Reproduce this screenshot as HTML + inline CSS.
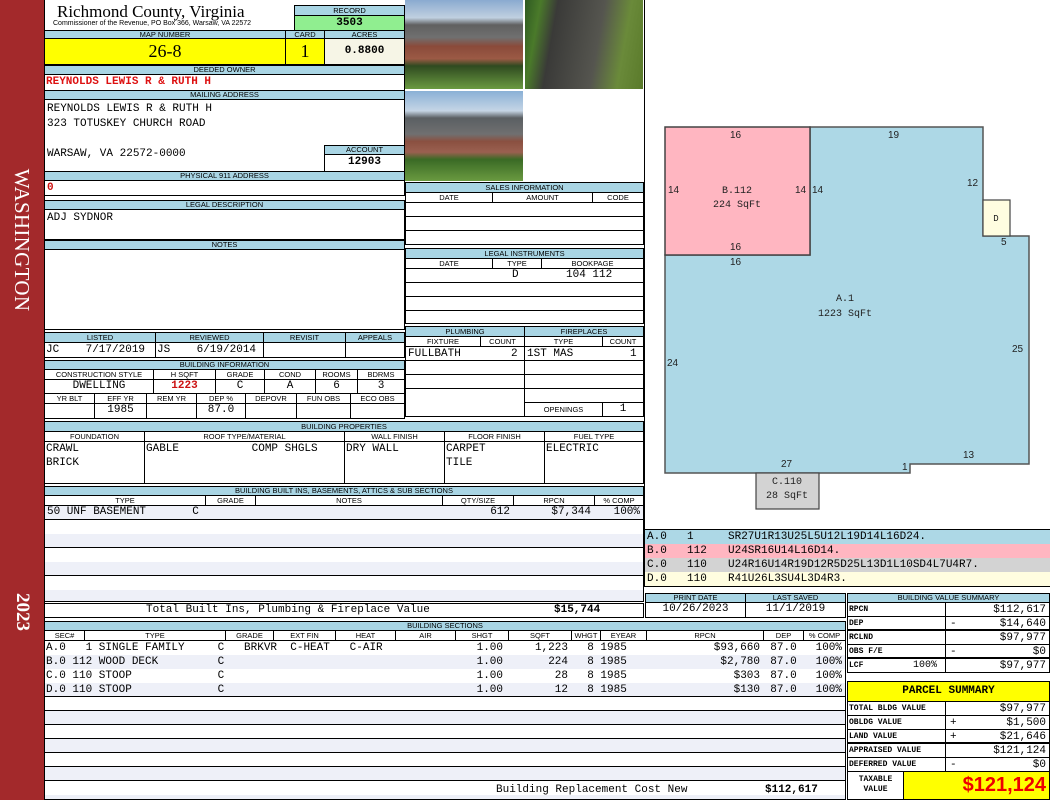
<!DOCTYPE html>
<html><head><meta charset="utf-8"><style>
*{margin:0;padding:0;box-sizing:border-box}
body{width:1050px;height:800px;position:relative;background:#fff;overflow:hidden;font-family:"Liberation Mono",monospace;font-size:11px;color:#000}
div{position:absolute}
.bx{border:1px solid #000}
.l{background:#a9d5e4;border:1px solid #000;font:7.5px/8px "Liberation Sans",sans-serif;text-align:center;white-space:nowrap;overflow:hidden}
.v{font:11px/13px "Liberation Mono",monospace;white-space:pre}
.c{text-align:center}.r{text-align:right}
.sm{font:bold 9px/12px "Liberation Mono",monospace;white-space:pre}
</style></head><body>
<!-- sidebar -->
<div style="left:0;top:0;width:45px;height:800px;background:#a3292b;border-right:1px solid #000"></div>
<div style="left:22px;top:240px;width:0;height:0"><div style="left:-90px;top:-11px;width:180px;height:22px;transform:rotate(90deg);color:#fff;font:21px/22px 'Liberation Serif',serif;text-align:center;letter-spacing:0.3px">WASHINGTON</div></div>
<div style="left:22px;top:612px;width:0;height:0"><div style="left:-30px;top:-10px;width:60px;height:20px;transform:rotate(90deg);color:#fff;font:bold 19px/20px 'Liberation Serif',serif;text-align:center">2023</div></div>

<!-- header -->
<div style="left:57px;top:2px;font:17px/19px 'Liberation Serif',serif">Richmond County, Virginia</div>
<div style="left:53px;top:19px;font:7px/9px 'Liberation Sans',sans-serif">Commissioner of the Revenue, PO Box 366, Warsaw, VA 22572</div>
<div class="l" style="left:294px;top:5px;width:111px;height:11px;line-height:9px">RECORD</div>
<div style="left:294px;top:15px;width:111px;height:16px;background:#90ee90;border:1px solid #000;font:bold 11px/14px 'Liberation Mono';text-align:center">3503</div>
<div class="l" style="left:44px;top:30px;width:242px;height:9px;line-height:7px">MAP NUMBER</div>
<div class="l" style="left:285px;top:30px;width:40px;height:9px;line-height:7px">CARD</div>
<div class="l" style="left:324px;top:30px;width:81px;height:9px;line-height:7px">ACRES</div>
<div style="left:44px;top:38px;width:242px;height:27px;background:#ffff00;border:1px solid #000;font:18px/25px 'Liberation Serif',serif;text-align:center">26-8</div>
<div style="left:285px;top:38px;width:40px;height:27px;background:#ffff00;border:1px solid #000;font:18px/25px 'Liberation Serif',serif;text-align:center">1</div>
<div style="left:324px;top:38px;width:81px;height:27px;background:#f6f5e6;border:1px solid #000;font:bold 11px/25px 'Liberation Mono';text-align:center">0.8800</div>
<div class="l" style="left:44px;top:65px;width:361px;height:10px">DEEDED OWNER</div>
<div class="bx" style="left:44px;top:74px;width:361px;height:17px"></div>
<div style="left:46px;top:76px;color:#d11;font:bold 11px/13px 'Liberation Mono';white-space:pre">REYNOLDS LEWIS R &amp; RUTH H</div>
<div class="l" style="left:44px;top:90px;width:361px;height:10px">MAILING ADDRESS</div>
<div class="bx" style="left:44px;top:99px;width:361px;height:73px"></div>
<div class="v" style="left:47px;top:102px;line-height:15px">REYNOLDS LEWIS R &amp; RUTH H
323 TOTUSKEY CHURCH ROAD</div>
<div class="v" style="left:47px;top:148px">WARSAW, VA 22572-0000</div>
<div class="l" style="left:324px;top:145px;width:81px;height:10px">ACCOUNT</div>
<div class="bx" style="left:324px;top:154px;width:81px;height:18px;font:bold 11px/15px 'Liberation Mono';text-align:center">12903</div>
<div class="l" style="left:44px;top:171px;width:361px;height:10px">PHYSICAL 911 ADDRESS</div>
<div class="bx" style="left:44px;top:180px;width:361px;height:16px"></div>
<div style="left:47px;top:182px;color:#c11;font:bold 11px/13px 'Liberation Mono'">0</div>
<div class="l" style="left:44px;top:200px;width:361px;height:10px">LEGAL DESCRIPTION</div>
<div class="bx" style="left:44px;top:209px;width:361px;height:31px"></div>
<div class="v" style="left:47px;top:212px">ADJ SYDNOR</div>
<div class="l" style="left:44px;top:240px;width:361px;height:10px">NOTES</div>
<div class="bx" style="left:44px;top:249px;width:361px;height:81px"></div>

<!-- listed -->
<div class="l" style="left:44px;top:332px;width:112px;height:11px;line-height:9px">LISTED</div>
<div class="l" style="left:155px;top:332px;width:109px;height:11px;line-height:9px">REVIEWED</div>
<div class="l" style="left:263px;top:332px;width:83px;height:11px;line-height:9px">REVISIT</div>
<div class="l" style="left:345px;top:332px;width:60px;height:11px;line-height:9px">APPEALS</div>
<div class="bx" style="left:44px;top:342px;width:112px;height:16px"></div>
<div class="bx" style="left:155px;top:342px;width:109px;height:16px"></div>
<div class="bx" style="left:263px;top:342px;width:83px;height:16px"></div>
<div class="bx" style="left:345px;top:342px;width:60px;height:16px"></div>
<div class="v" style="left:46px;top:344px">JC    7/17/2019</div>
<div class="v" style="left:157px;top:344px">JS    6/19/2014</div>

<!-- building info -->
<div class="l" style="left:44px;top:360px;width:361px;height:10px">BUILDING INFORMATION</div>
<div class="l" style="left:44px;top:369px;width:110px;height:11px;background:#fff;line-height:9px">CONSTRUCTION STYLE</div>
<div class="l" style="left:153px;top:369px;width:63px;height:11px;background:#fff;line-height:9px">H SQFT</div>
<div class="l" style="left:215px;top:369px;width:50px;height:11px;background:#fff;line-height:9px">GRADE</div>
<div class="l" style="left:264px;top:369px;width:52px;height:11px;background:#fff;line-height:9px">COND</div>
<div class="l" style="left:315px;top:369px;width:43px;height:11px;background:#fff;line-height:9px">ROOMS</div>
<div class="l" style="left:357px;top:369px;width:48px;height:11px;background:#fff;line-height:9px">BDRMS</div>
<div class="bx v c" style="left:44px;top:379px;width:110px;height:15px">DWELLING</div>
<div class="bx c" style="left:153px;top:379px;width:63px;height:15px;color:#c11;font:bold 11px/13px 'Liberation Mono'">1223</div>
<div class="bx v c" style="left:215px;top:379px;width:50px;height:15px">C</div>
<div class="bx v c" style="left:264px;top:379px;width:52px;height:15px">A</div>
<div class="bx v c" style="left:315px;top:379px;width:43px;height:15px">6</div>
<div class="bx v c" style="left:357px;top:379px;width:48px;height:15px">3</div>
<div class="l" style="left:44px;top:393px;width:51px;height:11px;background:#fff;line-height:9px">YR BLT</div>
<div class="l" style="left:94px;top:393px;width:53px;height:11px;background:#fff;line-height:9px">EFF YR</div>
<div class="l" style="left:146px;top:393px;width:51px;height:11px;background:#fff;line-height:9px">REM YR</div>
<div class="l" style="left:196px;top:393px;width:50px;height:11px;background:#fff;line-height:9px">DEP %</div>
<div class="l" style="left:245px;top:393px;width:52px;height:11px;background:#fff;line-height:9px">DEPOVR</div>
<div class="l" style="left:296px;top:393px;width:55px;height:11px;background:#fff;line-height:9px">FUN OBS</div>
<div class="l" style="left:350px;top:393px;width:55px;height:11px;background:#fff;line-height:9px">ECO OBS</div>
<div class="bx" style="left:44px;top:403px;width:51px;height:16px"></div>
<div class="bx v c" style="left:94px;top:403px;width:53px;height:16px">1985</div>
<div class="bx" style="left:146px;top:403px;width:51px;height:16px"></div>
<div class="bx v c" style="left:196px;top:403px;width:50px;height:16px">87.0</div>
<div class="bx" style="left:245px;top:403px;width:52px;height:16px"></div>
<div class="bx" style="left:296px;top:403px;width:55px;height:16px"></div>
<div class="bx" style="left:350px;top:403px;width:55px;height:16px"></div>

<!-- photos -->
<div style="left:405px;top:0;width:118px;height:89px;background:linear-gradient(#8aaad0 0,#c0d0e0 20%,#606060 28%,#707070 42%,#8a4a3a 52%,#9b5a45 66%,#2f4a20 74%,#6a9a40 100%)"></div>
<div style="left:525px;top:0;width:118px;height:89px;background:linear-gradient(100deg,#2f5a22 0,#4a7a2a 12%,#3a3a38 25%,#55554f 60%,#6a8a3a 80%,#5a7a2a 100%)"></div>
<div style="left:405px;top:91px;width:118px;height:90px;background:linear-gradient(#8ab0d6 0,#c5d5e5 22%,#5a5f63 30%,#707070 48%,#8a5040 56%,#9a6050 68%,#3a6a25 76%,#6a9a40 100%)"></div>

<!-- sales -->
<div class="l" style="left:405px;top:182px;width:239px;height:11px;line-height:9px">SALES INFORMATION</div>
<div class="l" style="left:405px;top:192px;width:88px;height:11px;background:#fff;line-height:9px">DATE</div>
<div class="l" style="left:492px;top:192px;width:101px;height:11px;background:#fff;line-height:9px">AMOUNT</div>
<div class="l" style="left:592px;top:192px;width:52px;height:11px;background:#fff;line-height:9px">CODE</div>
<div class="bx" style="left:405px;top:202px;width:239px;height:15px"></div>
<div class="bx" style="left:405px;top:216px;width:239px;height:15px"></div>
<div class="bx" style="left:405px;top:230px;width:239px;height:15px"></div>
<div class="l" style="left:405px;top:248px;width:239px;height:11px;line-height:9px">LEGAL INSTRUMENTS</div>
<div class="l" style="left:405px;top:258px;width:88px;height:11px;background:#fff;line-height:9px">DATE</div>
<div class="l" style="left:492px;top:258px;width:50px;height:11px;background:#fff;line-height:9px">TYPE</div>
<div class="l" style="left:541px;top:258px;width:103px;height:11px;background:#fff;line-height:9px">BOOKPAGE</div>
<div class="bx" style="left:405px;top:268px;width:239px;height:15px"></div>
<div class="v" style="left:512px;top:269px">D</div><div class="v" style="left:566px;top:269px">104 112</div>
<div class="bx" style="left:405px;top:282px;width:239px;height:15px"></div>
<div class="bx" style="left:405px;top:296px;width:239px;height:15px"></div>
<div class="bx" style="left:405px;top:310px;width:239px;height:14px"></div>

<!-- plumbing / fireplaces -->
<div class="l" style="left:405px;top:326px;width:120px;height:11px;line-height:9px">PLUMBING</div>
<div class="l" style="left:524px;top:326px;width:120px;height:11px;line-height:9px">FIREPLACES</div>
<div class="l" style="left:405px;top:336px;width:76px;height:11px;background:#fff;line-height:9px">FIXTURE</div>
<div class="l" style="left:480px;top:336px;width:45px;height:11px;background:#fff;line-height:9px">COUNT</div>
<div class="l" style="left:524px;top:336px;width:79px;height:11px;background:#fff;line-height:9px">TYPE</div>
<div class="l" style="left:602px;top:336px;width:42px;height:11px;background:#fff;line-height:9px">COUNT</div>
<div class="bx" style="left:405px;top:346px;width:120px;height:71px"></div>
<div class="bx" style="left:524px;top:346px;width:120px;height:57px"></div>
<div style="left:405px;top:360px;width:239px;height:1px;background:#000"></div>
<div style="left:405px;top:374px;width:239px;height:1px;background:#000"></div>
<div style="left:405px;top:388px;width:239px;height:1px;background:#000"></div>
<div class="v" style="left:408px;top:348px">FULLBATH</div><div class="v" style="left:511px;top:348px">2</div>
<div class="v" style="left:527px;top:348px">1ST MAS</div><div class="v" style="left:630px;top:348px">1</div>
<div class="bx" style="left:524px;top:402px;width:79px;height:15px;font:7.5px/13px 'Liberation Sans';text-align:center">OPENINGS</div>
<div class="bx v c" style="left:602px;top:402px;width:42px;height:15px">1</div>

<!-- building properties -->
<div class="l" style="left:44px;top:421px;width:600px;height:11px;line-height:9px">BUILDING PROPERTIES</div>
<div class="l" style="left:44px;top:431px;width:101px;height:11px;background:#fff;line-height:9px">FOUNDATION</div>
<div class="l" style="left:144px;top:431px;width:201px;height:11px;background:#fff;line-height:9px">ROOF TYPE/MATERIAL</div>
<div class="l" style="left:344px;top:431px;width:101px;height:11px;background:#fff;line-height:9px">WALL FINISH</div>
<div class="l" style="left:444px;top:431px;width:101px;height:11px;background:#fff;line-height:9px">FLOOR FINISH</div>
<div class="l" style="left:544px;top:431px;width:100px;height:11px;background:#fff;line-height:9px">FUEL TYPE</div>
<div class="bx" style="left:44px;top:441px;width:101px;height:43px"></div>
<div class="bx" style="left:144px;top:441px;width:201px;height:43px"></div>
<div class="bx" style="left:344px;top:441px;width:101px;height:43px"></div>
<div class="bx" style="left:444px;top:441px;width:101px;height:43px"></div>
<div class="bx" style="left:544px;top:441px;width:100px;height:43px"></div>
<div class="v" style="left:46px;top:442px;line-height:14px">CRAWL
BRICK</div>
<div class="v" style="left:146px;top:442px;line-height:14px">GABLE           COMP SHGLS</div>
<div class="v" style="left:346px;top:442px;line-height:14px">DRY WALL</div>
<div class="v" style="left:446px;top:442px;line-height:14px">CARPET
TILE</div>
<div class="v" style="left:546px;top:442px;line-height:14px">ELECTRIC</div>

<!-- built ins -->
<div class="l" style="left:44px;top:486px;width:600px;height:10px">BUILDING BUILT INS, BASEMENTS, ATTICS &amp; SUB SECTIONS</div>
<div class="l" style="left:44px;top:495px;width:162px;height:11px;background:#fff;line-height:9px">TYPE</div>
<div class="l" style="left:205px;top:495px;width:51px;height:11px;background:#fff;line-height:9px">GRADE</div>
<div class="l" style="left:255px;top:495px;width:188px;height:11px;background:#fff;line-height:9px">NOTES</div>
<div class="l" style="left:442px;top:495px;width:72px;height:11px;background:#fff;line-height:9px">QTY/SIZE</div>
<div class="l" style="left:513px;top:495px;width:82px;height:11px;background:#fff;line-height:9px">RPCN</div>
<div class="l" style="left:594px;top:495px;width:50px;height:11px;background:#fff;line-height:9px">% COMP</div>
<div class="bx" style="left:44px;top:505px;width:600px;height:97px;background:repeating-linear-gradient(#eef0f8 0 14px,#fff 14px 28px)"></div>
<div style="left:44px;top:519px;width:600px;height:1px;background:#000"></div>
<div style="left:44px;top:547px;width:600px;height:1px;background:#000"></div>
<div style="left:44px;top:575px;width:600px;height:1px;background:#000"></div>
<div class="v" style="left:47px;top:506px">50 UNF BASEMENT       C</div>
<div class="v r" style="left:442px;top:506px;width:68px">612</div>
<div class="v r" style="left:513px;top:506px;width:78px">$7,344</div>
<div class="v r" style="left:594px;top:506px;width:46px">100%</div>
<div class="bx" style="left:44px;top:603px;width:600px;height:15px"></div>
<div class="v" style="left:146px;top:604px">Total Built Ins, Plumbing &amp; Fireplace Value</div>
<div class="v" style="left:554px;top:604px;font-weight:bold">$15,744</div>

<!-- building sections -->
<div class="l" style="left:44px;top:621px;width:802px;height:10px">BUILDING SECTIONS</div>
<div class="l" style="left:44px;top:630px;width:41px;height:11px;background:#fff;line-height:9px">SEC#</div>
<div class="l" style="left:84px;top:630px;width:142px;height:11px;background:#fff;line-height:9px">TYPE</div>
<div class="l" style="left:225px;top:630px;width:49px;height:11px;background:#fff;line-height:9px">GRADE</div>
<div class="l" style="left:273px;top:630px;width:63px;height:11px;background:#fff;line-height:9px">EXT FIN</div>
<div class="l" style="left:335px;top:630px;width:61px;height:11px;background:#fff;line-height:9px">HEAT</div>
<div class="l" style="left:395px;top:630px;width:61px;height:11px;background:#fff;line-height:9px">AIR</div>
<div class="l" style="left:455px;top:630px;width:54px;height:11px;background:#fff;line-height:9px">SHGT</div>
<div class="l" style="left:508px;top:630px;width:64px;height:11px;background:#fff;line-height:9px">SQFT</div>
<div class="l" style="left:571px;top:630px;width:30px;height:11px;background:#fff;line-height:9px">WHGT</div>
<div class="l" style="left:600px;top:630px;width:47px;height:11px;background:#fff;line-height:9px">EYEAR</div>
<div class="l" style="left:646px;top:630px;width:118px;height:11px;background:#fff;line-height:9px">RPCN</div>
<div class="l" style="left:763px;top:630px;width:41px;height:11px;background:#fff;line-height:9px">DEP</div>
<div class="l" style="left:803px;top:630px;width:43px;height:11px;background:#fff;line-height:9px">% COMP</div>
<div class="bx" style="left:44px;top:640px;width:802px;height:160px;background:repeating-linear-gradient(#fff 0 14px,#eef0f8 14px 28px)"></div>
<div style="left:44px;top:696px;width:802px;height:1px;background:#000"></div>
<div style="left:44px;top:710px;width:802px;height:1px;background:#000"></div>
<div style="left:44px;top:724px;width:802px;height:1px;background:#000"></div>
<div style="left:44px;top:738px;width:802px;height:1px;background:#000"></div>
<div style="left:44px;top:752px;width:802px;height:1px;background:#000"></div>
<div style="left:44px;top:766px;width:802px;height:1px;background:#000"></div>
<div style="left:44px;top:780px;width:802px;height:1px;background:#000"></div>
<div class="v" style="left:46px;top:641px;line-height:14px">A.0   1 SINGLE FAMILY     C   BRKVR  C-HEAT   C-AIR
B.0 112 WOOD DECK         C
C.0 110 STOOP             C
D.0 110 STOOP             C</div>
<div class="v r" style="left:455px;top:641px;width:48px;line-height:14px">1.00
1.00
1.00
1.00</div>
<div class="v r" style="left:508px;top:641px;width:60px;line-height:14px">1,223
224
28
12</div>
<div class="v" style="left:574px;top:641px;line-height:14px">  8 1985
  8 1985
  8 1985
  8 1985</div>
<div class="v r" style="left:646px;top:641px;width:114px;line-height:14px">$93,660
$2,780
$303
$130</div>
<div class="v c" style="left:763px;top:641px;width:41px;line-height:14px">87.0
87.0
87.0
87.0</div>
<div class="v r" style="left:803px;top:641px;width:39px;line-height:14px">100%
100%
100%
100%</div>
<div class="v" style="left:496px;top:784px">Building Replacement Cost New</div>
<div class="v" style="left:765px;top:784px;font-weight:bold">$112,617</div>

<!-- sketch -->
<div style="left:644px;top:0;width:406px;height:529px;border-left:1px solid #000"></div>
<svg style="position:absolute;left:0;top:0" width="1050" height="800">
<polygon points="665,473 665,255 810,255 810,127 983,127 983,236 1029,236 1029,464 910,464 910,473" fill="#add8e6" stroke="#555" stroke-width="1.5"/>
<rect x="665" y="127" width="145" height="128" fill="#ffb6c1" stroke="#444" stroke-width="1.5"/>
<rect x="983" y="200" width="27" height="36" fill="#fffde0" stroke="#444" stroke-width="1.2"/>
<rect x="756" y="473" width="63" height="36" fill="#d3d3d3" stroke="#444" stroke-width="1.2"/>
<g font-family="Liberation Sans" font-size="10" fill="#222">
<text x="730" y="138">16</text><text x="888" y="138">19</text>
<text x="668" y="193">14</text><text x="795" y="193">14</text><text x="812" y="193">14</text>
<text x="967" y="186">12</text><text x="1001" y="245">5</text>
<text x="730" y="250">16</text><text x="730" y="265">16</text>
<text x="667" y="366">24</text><text x="1012" y="352">25</text>
<text x="963" y="458">13</text><text x="781" y="467">27</text><text x="902" y="470">1</text>
</g>
<g font-family="Liberation Mono" font-size="10" fill="#222" text-anchor="middle">
<text x="737" y="193">B.112</text><text x="737" y="207">224 SqFt</text>
<text x="845" y="301">A.1</text><text x="845" y="316">1223 SqFt</text>
<text x="996" y="221" font-size="9">D</text>
<text x="787" y="484">C.110</text><text x="787" y="498">28 SqFt</text>
</g>
</svg>

<!-- codes -->
<div class="bx" style="left:644px;top:529px;width:406px;height:58px"></div>
<div style="left:645px;top:530px;width:405px;height:14px;background:#add8e6"></div>
<div style="left:645px;top:544px;width:405px;height:14px;background:#ffb6c1"></div>
<div style="left:645px;top:558px;width:405px;height:14px;background:#d3d3d3"></div>
<div style="left:645px;top:572px;width:405px;height:14px;background:#fffde0"></div>
<div class="v" style="left:647px;top:530px;line-height:14px">A.0
B.0
C.0
D.0</div>
<div class="v" style="left:687px;top:530px;line-height:14px">1
112
110
110</div>
<div class="v" style="left:728px;top:530px;line-height:14px">SR27U1R13U25L5U12L19D14L16D24.
U24SR16U14L16D14.
U24R16U14R19D12R5D25L13D1L10SD4L7U4R7.
R41U26L3SU4L3D4R3.</div>

<!-- print date -->
<div class="l" style="left:645px;top:593px;width:101px;height:10px">PRINT DATE</div>
<div class="l" style="left:745px;top:593px;width:101px;height:10px">LAST SAVED</div>
<div class="bx v c" style="left:645px;top:602px;width:101px;height:16px">10/26/2023</div>
<div class="bx v c" style="left:745px;top:602px;width:101px;height:16px">11/1/2019</div>

<!-- value summary -->
<div class="l" style="left:847px;top:593px;width:203px;height:10px">BUILDING VALUE SUMMARY</div>
<div class="bx" style="left:847px;top:602px;width:99px;height:71px"></div>
<div class="bx" style="left:945px;top:602px;width:105px;height:71px"></div>
<div style="left:847px;top:616px;width:203px;height:1px;background:#000"></div>
<div style="left:847px;top:629px;width:203px;height:2px;background:#000"></div>
<div style="left:847px;top:644px;width:203px;height:1px;background:#000"></div>
<div style="left:847px;top:657px;width:203px;height:2px;background:#000"></div>
<div class="sm" style="left:849px;top:603px;line-height:14px;font-size:8px">RPCN
DEP
RCLND
OBS F/E
LCF</div>
<div class="v" style="left:913px;top:659px;font-size:10px">100%</div>
<div class="v" style="left:950px;top:603px;line-height:14px">
-
 
-</div>
<div class="v r" style="left:945px;top:603px;width:101px;line-height:14px">$112,617
$14,640
$97,977
$0
$97,977</div>

<!-- parcel summary -->
<div style="left:847px;top:681px;width:203px;height:21px;background:#ffff00;border:1px solid #000;font:bold 11px/19px 'Liberation Mono';text-align:center">PARCEL SUMMARY</div>
<div class="bx" style="left:847px;top:701px;width:99px;height:71px"></div>
<div class="bx" style="left:945px;top:701px;width:105px;height:71px"></div>
<div style="left:847px;top:715px;width:203px;height:1px;background:#000"></div>
<div style="left:847px;top:729px;width:203px;height:1px;background:#000"></div>
<div style="left:847px;top:742px;width:203px;height:2px;background:#000"></div>
<div style="left:847px;top:757px;width:203px;height:1px;background:#000"></div>
<div class="sm" style="left:849px;top:702px;line-height:14px;font-size:8px">TOTAL BLDG VALUE
OBLDG VALUE
LAND VALUE
APPRAISED VALUE
DEFERRED VALUE</div>
<div class="v" style="left:950px;top:702px;line-height:14px"> 
+
+
 
-</div>
<div class="v r" style="left:945px;top:702px;width:101px;line-height:14px">$97,977
$1,500
$21,646
$121,124
$0</div>
<div class="bx" style="left:847px;top:771px;width:57px;height:29px;font:bold 8px/10px 'Liberation Mono';text-align:center;padding-top:3px">TAXABLE<br>VALUE</div>
<div style="left:903px;top:771px;width:147px;height:29px;background:#ffff00;border:1px solid #000;color:#e00;font:bold 20px/27px 'Liberation Sans',sans-serif;text-align:right;padding-right:3px">$121,124</div>
</body></html>
